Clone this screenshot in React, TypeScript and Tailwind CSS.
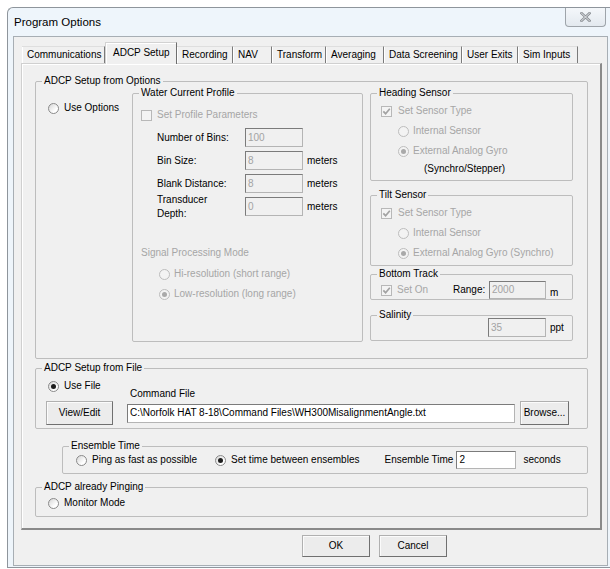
import React from "react";

type Kids = { children?: React.ReactNode };

const Radio = ({ checked = false, disabled = false }: { checked?: boolean; disabled?: boolean }) => (
  <span
    className={`relative block h-[11px] w-[11px] shrink-0 rounded-full border ${
      disabled ? "border-[#bdbdbd] bg-[#f3f3f3]" : "border-[#8a8a8a] bg-[linear-gradient(135deg,#d6d6d6,#ffffff_70%)]"
    }`}
  >
    {checked && (
      <span
        className={`absolute left-[2px] top-[2px] h-[5px] w-[5px] rounded-full ${
          disabled ? "bg-[#a9a9a9]" : "bg-[#1e1e1e]"
        }`}
      />
    )}
  </span>
);

const Check = ({ checked = false }: { checked?: boolean }) => (
  <span className="flex h-[11px] w-[11px] shrink-0 items-center justify-center border border-[#b8b8b8] bg-[#f4f4f4]">
    {checked && (
      <svg width="9" height="9" viewBox="0 0 9 9">
        <path d="M1.3 4.3 L3.6 6.7 L7.8 1.8" fill="none" stroke="#a2a2a2" strokeWidth="1.7" />
      </svg>
    )}
  </span>
);

const Field = ({
  value,
  enabled = false,
  className = "",
}: {
  value: string;
  enabled?: boolean;
  className?: string;
}) => (
  <div
    className={`flex shrink-0 items-center overflow-hidden whitespace-nowrap border border-[#b4b4b4] border-l-[#7b7b7b] border-t-[#7b7b7b] pl-[2px] ${
      enabled ? "bg-white text-black" : "bg-[#f0f0f0] text-[#a3a3a3]"
    } ${className}`}
  >
    {value}
  </div>
);

const Button = ({ label, className = "" }: { label: string; className?: string }) => (
  <div
    className={`flex shrink-0 items-center justify-center border border-[#b0b0b0] border-b-[#707070] border-r-[#707070] bg-[#ececec] text-black shadow-[inset_1px_1px_0_#fbfbfb] ${className}`}
  >
    {label}
  </div>
);

const Group = ({ title, className = "", children }: Kids & { title: string; className?: string }) => (
  <fieldset className={`min-w-0 shrink-0 rounded-[2px] border border-[#bdbdbd] ${className}`}>
    <legend className="ml-[6px] px-[2px] text-[10px] leading-[12px] text-black">{title}</legend>
    {children}
  </fieldset>
);

const Row = ({ className = "", children }: Kids & { className?: string }) => (
  <div className={`flex h-[14px] items-center whitespace-nowrap ${className}`}>{children}</div>
);

const tabs: { label: string; w: string; active?: boolean }[] = [
  { label: "Communications", w: "w-[83px]" },
  { label: "ADCP Setup", w: "w-[72px]", active: true },
  { label: "Recording", w: "w-[56px]" },
  { label: "NAV", w: "w-[39px]" },
  { label: "Transform", w: "w-[54px]" },
  { label: "Averaging", w: "w-[58px]" },
  { label: "Data Screening", w: "w-[78px]" },
  { label: "User Exits", w: "w-[56px]" },
  { label: "Sim Inputs", w: "w-[60px]" },
];

const DIM = "text-[#a6a6a6]";

export default function App() {
  return (
    <div className="relative h-[569px] w-[610px] overflow-hidden bg-white font-['Liberation_Sans',Arial,sans-serif] text-[10px] leading-[14px] text-[#111]">
      {/* dialog frame */}
      <div className="ml-[7px] mt-[7px] h-[561px] w-[603px] rounded-tl-[6px] border border-r-0 border-[#8e959c] bg-[#eef5fb] pl-[5px] pr-[2px]">
        {/* caption */}
        <div className="flex h-[28px] items-start">
          <span className="ml-[1px] mt-[7px] text-[11.5px] leading-[14px] text-black">Program Options</span>
          <div className="ml-auto mr-[2px] flex h-[19px] w-[41px] items-center justify-center rounded-b-[4px] border border-t-0 border-[#9ea4aa] bg-[linear-gradient(#f4f7fa,#e3e9ef)]">
            <svg width="11" height="10" viewBox="0 0 11 10">
              <path d="M1.5 1.2 L9.5 8.8 M9.5 1.2 L1.5 8.8" stroke="#8a8f94" strokeWidth="2.6" strokeLinecap="square" />
              <path d="M1.5 1.2 L9.5 8.8 M9.5 1.2 L1.5 8.8" stroke="#eef1f4" strokeWidth="0.9" strokeLinecap="square" />
            </svg>
          </div>
        </div>

        {/* client area */}
        <div className="h-[530px] border border-[#a7aeb4] bg-[#f0f0f0]">
          {/* tab strip */}
          <div className="ml-[8px] mt-[5px] flex h-[21px] items-end">
            {tabs.map((t) =>
              t.active ? (
                <div
                  key={t.label}
                  className={`relative z-10 -mb-[1px] flex h-[22px] shrink-0 items-start whitespace-nowrap border-l border-r border-t border-l-[#d2d2d2] border-r-[#6e6e6e] border-t-[#d2d2d2] bg-[#f0f0f0] pl-[7px] pt-[3px] text-black shadow-[inset_1px_1px_0_#ffffff] ${t.w}`}
                >
                  {t.label}
                </div>
              ) : (
                <div
                  key={t.label}
                  className={`flex h-[17px] shrink-0 items-center whitespace-nowrap border-r border-t border-r-[#7a7a7a] border-t-[#dedede] pl-[5px] text-black shadow-[inset_1px_0_0_#ffffff] ${t.w}`}
                >
                  {t.label}
                </div>
              )
            )}
          </div>

          {/* tab page */}
          <div className="ml-[7px] flex h-[467px] w-[581px] flex-col border-b-2 border-l border-r-2 border-t border-b-[#8a8a8a] border-l-[#d0d0d0] border-r-[#8a8a8a] border-t-[#d0d0d0] shadow-[inset_1px_1px_0_#ffffff]">
            {/* ADCP Setup from Options */}
            <Group title="ADCP Setup from Options" className="ml-[13px] mt-[11px] h-[284px] w-[553px]">
              <div className="flex">
                <div className="w-[96px] shrink-0 pl-[12px] pt-[14px]">
                  <Row className="gap-[5px] text-black">
                    <Radio />
                    Use Options
                  </Row>
                </div>

                <Group title="Water Current Profile" className="h-[255px] w-[231px]">
                  <Row className={`ml-[8px] mt-[9px] gap-[5px] ${DIM}`}>
                    <Check />
                    Set Profile Parameters
                  </Row>
                  <div className="ml-[24px] mt-[6px] flex flex-col gap-[4px]">
                    {[
                      { l: "Number of Bins:", v: "100", u: "" },
                      { l: "Bin Size:", v: "8", u: "meters" },
                      { l: "Blank Distance:", v: "8", u: "meters" },
                    ].map((r) => (
                      <div key={r.l} className="flex h-[19px] items-center whitespace-nowrap text-black">
                        <span className="w-[88px] shrink-0">{r.l}</span>
                        <Field value={r.v} className="h-[19px] w-[58px]" />
                        <span className="ml-[4px]">{r.u}</span>
                      </div>
                    ))}
                    <div className="flex h-[19px] items-center whitespace-nowrap text-black">
                      <span className="-my-[5px] w-[88px] shrink-0 leading-[14px]">
                        Transducer
                        <br />
                        Depth:
                      </span>
                      <Field value="0" className="h-[19px] w-[58px]" />
                      <span className="ml-[4px]">meters</span>
                    </div>
                  </div>
                  <Row className={`ml-[8px] mt-[30px] ${DIM}`}>Signal Processing Mode</Row>
                  <Row className={`ml-[26px] mt-[7px] gap-[4px] ${DIM}`}>
                    <Radio disabled />
                    Hi-resolution (short range)
                  </Row>
                  <Row className={`ml-[26px] mt-[6px] gap-[4px] ${DIM}`}>
                    <Radio disabled checked />
                    Low-resolution (long range)
                  </Row>
                </Group>

                <div className="ml-[7px] flex w-[203px] shrink-0 flex-col">
                  <Group title="Heading Sensor" className="h-[94px] w-full">
                    <Row className={`ml-[10px] mt-[5px] gap-[6px] ${DIM}`}>
                      <Check checked />
                      Set Sensor Type
                    </Row>
                    <Row className={`ml-[27px] mt-[6px] gap-[4px] ${DIM}`}>
                      <Radio disabled />
                      Internal Sensor
                    </Row>
                    <Row className={`ml-[27px] mt-[6px] gap-[4px] ${DIM}`}>
                      <Radio disabled checked />
                      External Analog Gyro
                    </Row>
                    <Row className="ml-[53px] mt-[4px] text-black">(Synchro/Stepper)</Row>
                  </Group>

                  <Group title="Tilt Sensor" className="mt-[8px] h-[77px] w-full">
                    <Row className={`ml-[10px] mt-[5px] gap-[6px] ${DIM}`}>
                      <Check checked />
                      Set Sensor Type
                    </Row>
                    <Row className={`ml-[27px] mt-[6px] gap-[4px] ${DIM}`}>
                      <Radio disabled />
                      Internal Sensor
                    </Row>
                    <Row className={`ml-[27px] mt-[6px] gap-[4px] ${DIM}`}>
                      <Radio disabled checked />
                      External Analog Gyro (Synchro)
                    </Row>
                  </Group>

                  <Group title="Bottom Track" className="mt-[2px] h-[32px] w-full">
                    <div className="ml-[10px] mt-[1px] flex h-[18px] items-center whitespace-nowrap">
                      <div className={`flex w-[72px] shrink-0 items-center gap-[5px] ${DIM}`}>
                        <Check checked />
                        Set On
                      </div>
                      <span className="w-[36px] shrink-0 text-black">Range:</span>
                      <Field value="2000" className="h-[18px] w-[57px]" />
                      <span className="-mb-[1px] ml-[4px] self-end text-black">m</span>
                    </div>
                  </Group>

                  <Group title="Salinity" className="mt-[9px] h-[32px] w-full">
                    <div className="-mt-[3px] ml-[117px] flex h-[19px] items-center whitespace-nowrap">
                      <Field value="35" className="h-[19px] w-[58px]" />
                      <span className="ml-[4px] text-black">ppt</span>
                    </div>
                  </Group>
                </div>
              </div>
            </Group>

            {/* ADCP Setup from File */}
            <Group title="ADCP Setup from File" className="ml-[13px] mt-[3px] h-[67px] w-[553px]">
              <div className="flex">
                <div className="w-[94px] shrink-0 pl-[12px] pt-[5px]">
                  <Row className="gap-[5px] text-black">
                    <Radio checked />
                    Use File
                  </Row>
                </div>
                <Row className="mt-[13px] text-black">Command File</Row>
              </div>
              <div className="flex h-[24px] items-center">
                <Button label="View/Edit" className="ml-[10px] h-[24px] w-[67px]" />
                <Field
                  enabled
                  value="C:\Norfolk HAT 8-18\Command Files\WH300MisalignmentAngle.txt"
                  className="ml-[14px] h-[19px] w-[388px]"
                />
                <Button label="Browse..." className="ml-[5px] h-[24px] w-[49px]" />
              </div>
            </Group>

            {/* Ensemble Time */}
            <Group title="Ensemble Time" className="ml-[40px] mt-[11px] h-[34px] w-[526px]">
              <div className="-mt-[1px] flex h-[18px] items-center whitespace-nowrap text-black">
                <div className="ml-[13px] flex items-center gap-[5px]">
                  <Radio />
                  Ping as fast as possible
                </div>
                <div className="ml-[18px] flex items-center gap-[5px]">
                  <Radio checked />
                  Set time between ensembles
                </div>
                <span className="ml-[25px]">Ensemble Time</span>
                <Field enabled value="2" className="ml-[3px] h-[18px] w-[60px]" />
                <span className="ml-[7px]">seconds</span>
              </div>
            </Group>

            {/* ADCP already Pinging */}
            <Group title="ADCP already Pinging" className="ml-[13px] mt-[7px] h-[36px] w-[553px]">
              <Row className="ml-[12px] mt-[3px] gap-[5px] text-black">
                <Radio />
                Monitor Mode
              </Row>
            </Group>
          </div>

          {/* dialog buttons */}
          <div className="ml-[288px] mt-[5px] flex gap-[9px]">
            <Button label="OK" className="h-[22px] w-[68px]" />
            <Button label="Cancel" className="h-[22px] w-[68px]" />
          </div>
        </div>
      </div>
    </div>
  );
}
